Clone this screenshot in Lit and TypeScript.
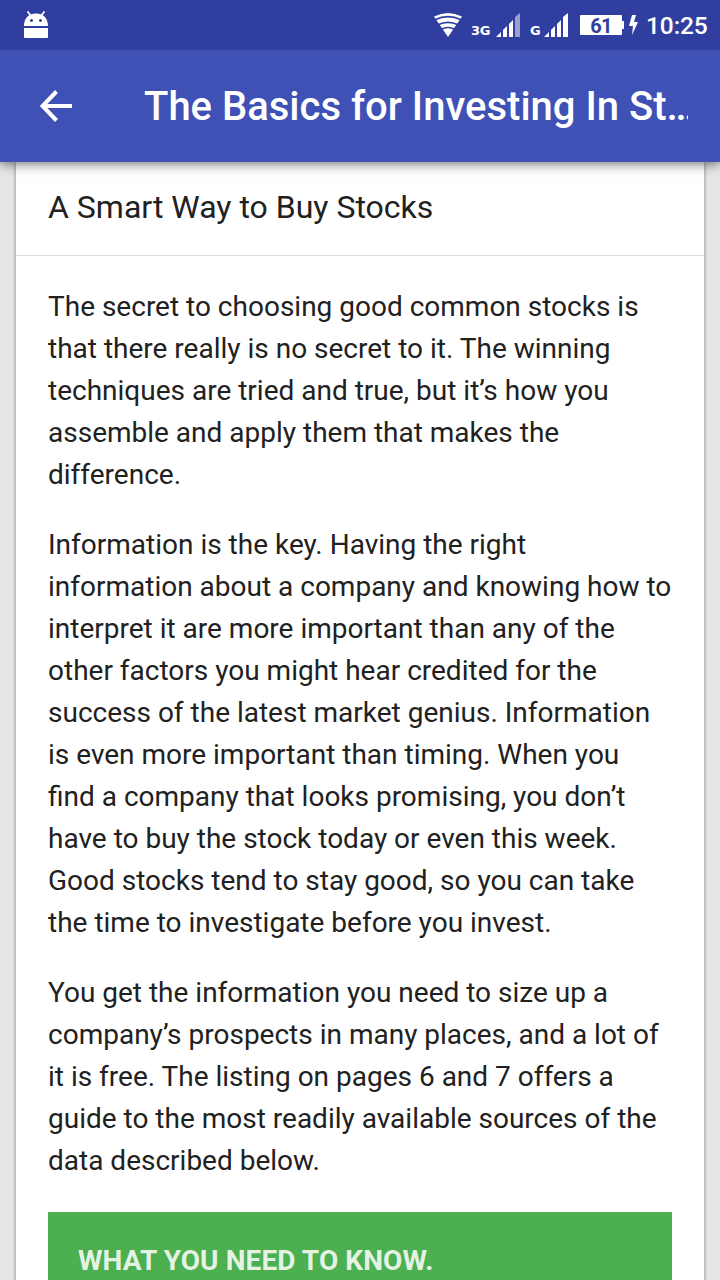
import { LitElement, html, css } from "lit";
import { customElement } from "lit/decorators.js";

const PARAGRAPHS = [
  "The secret to choosing good common stocks is that there really is no secret to it. The winning techniques are tried and true, but it’s how you assemble and apply them that makes the difference.",
  "Information is the key. Having the right information about a company and knowing how to interpret it are more important than any of the other factors you might hear credited for the success of the latest market genius. Information is even more important than timing. When you find a company that looks promising, you don’t have to buy the stock today or even this week. Good stocks tend to stay good, so you can take the time to investigate before you invest.",
  "You get the information you need to size up a company’s prospects in many places, and a lot of it is free. The listing on pages 6 and 7 offers a guide to the most readily available sources of the data described below.",
];

@customElement("status-bar")
class StatusBar extends LitElement {
  static styles = css`
    :host { display: flex; position: relative; z-index: 2; height: 50px; background: #303f9f; color: #fff; box-sizing: border-box; padding: 0 12px 0 24px; align-items: center; }
    svg { display: block; flex: none; }
    .droid { margin-right: auto; }
    .net { flex: none; font: 700 13px/12px "DejaVu Sans", sans-serif; width: 19px; margin: 12px 0 0 9px; letter-spacing: -0.4px; white-space: nowrap; }
    .net.short { width: 9px; }
    .bars { margin-left: 6px; }
    .bars.second { margin-left: 5px; }
    .battery { display: flex; align-items: center; margin-left: 11px; }
    .level { width: 42px; height: 20px; border-radius: 1px; background: #fff; color: #303f9f; text-align: center; font: 700 20px/22px Roboto, sans-serif; letter-spacing: -0.8px; }
    .tip { width: 2px; height: 8px; background: #fff; }
    .bolt { margin-left: 5px; }
    .time { flex: none; font: 500 24.500px/30px Roboto, sans-serif; margin-left: 7px; width: 62px; white-space: nowrap; margin-top: 2px; letter-spacing: -0.1px; }
  `;
  bars(last: string, cls: string) {
    return html`<svg class=${cls} width="25" height="26" viewBox="0 0 25 26" fill="#fff">
      <path d="M0 25 5 20V25ZM7 18 11 14V25H7ZM13 12 17 8V25H13Z" />
      <path d="M19 5 24 1V25H19Z" opacity=${last} />
    </svg>`;
  }
  render() {
    return html`
      <svg class="droid" width="24" height="28" viewBox="0 0 24 28">
        <path d="M4 1 7 5M20 1 17 5" stroke="#fff" stroke-width="1.8" stroke-linecap="round" />
        <path fill="#fff" fill-rule="evenodd" d="M0 15C0 7 5 2.500 12 2.500S24 7 24 15ZM7.500 8a1.500 1.500 0 1 0 .01 0ZM16.500 8a1.500 1.500 0 1 0 .01 0Z" />
        <path fill="#fff" d="M0 17H24V26Q24 27 23 27H1Q0 27 0 26Z" />
      </svg>
      <svg class="wifi" width="28" height="26" viewBox="0 0 28 26">
        <path fill="#fff" d="M0 4.500Q14-2.500 28 4.500L14 25Z" />
        <path d="M1 7.800Q14 1.500 27 7.800M4 12.800Q14 7.800 24 12.800M7 17.500Q14 13.500 21 17.500" fill="none" stroke="#303f9f" stroke-width="1.700" />
      </svg>
      <span class="net">3G</span>${this.bars(".5", "bars")}
      <span class="net short">G</span>${this.bars("1", "bars second")}
      <div class="battery"><span class="level">61</span><span class="tip"></span></div>
      <svg class="bolt" width="10" height="20" viewBox="0 0 10 20"><path fill="#fff" d="M3 0H7L5 7H9L3 20 4 11H0Z" /></svg>
      <span class="time">10:25</span>
    `;
  }
}

@customElement("app-bar")
class AppBar extends LitElement {
  static styles = css`
    :host { display: flex; position: relative; z-index: 1; height: 112px; box-sizing: border-box; align-items: center; padding: 0 32px 0 40px; background: #3f51b5; color: #fff; box-shadow: 0 2px 11px rgba(0, 0, 0, 0.55); }
    svg { display: block; flex: none; margin-right: 72px; }
    h1 { flex: 1; min-width: 0; margin: 2px 0 0; font: 500 40px/56px Roboto, sans-serif; white-space: nowrap; overflow: hidden; }
  `;
  render() {
    return html`
      <svg width="32" height="32" viewBox="0 0 32 32"><path d="M32 16H3M16.500 1.500 2.500 16 16.500 30.500" fill="none" stroke="#fff" stroke-width="4" /></svg>
      <h1>The Basics for Investing In St…</h1>
    `;
  }
}

@customElement("article-card")
class ArticleCard extends LitElement {
  static styles = css`
    :host { display: block; margin: 0 16px; min-height: 1118px; background: #fff; color: #212121; box-shadow: 0 0 4px rgba(0, 0, 0, 0.45); font-family: Roboto, sans-serif; }
    h2 { margin: 0; height: 94px; box-sizing: border-box; padding: 25px 32px 0; border-bottom: 1px solid #dcdcdc; font-weight: 400; font-size: 32px; line-height: 40px; }
    .body { padding: 30px 32px 0; }
    p { margin: 0 0 28px; font-size: 28px; line-height: 42px; }
    .callout { margin-top: 30px; height: 100px; box-sizing: border-box; padding: 28px 30px; background: #4caf50; color: rgba(255, 255, 255, 0.87); font-weight: 700; font-size: 28px; line-height: 42px; letter-spacing: 0.09px; white-space: nowrap; }
  `;
  render() {
    return html`
      <h2>A Smart Way to Buy Stocks</h2>
      <div class="body">
        ${PARAGRAPHS.map((text) => html`<p>${text}</p>`)}
        <div class="callout">WHAT YOU NEED TO KNOW.</div>
      </div>
    `;
  }
}

@customElement("app-root")
class AppRoot extends LitElement {
  static styles = css`
    :host { display: block; height: 1280px; overflow: hidden; background: #e6e6e6; }
  `;
  render() {
    return html`<status-bar></status-bar><app-bar></app-bar><article-card></article-card>`;
  }
}
